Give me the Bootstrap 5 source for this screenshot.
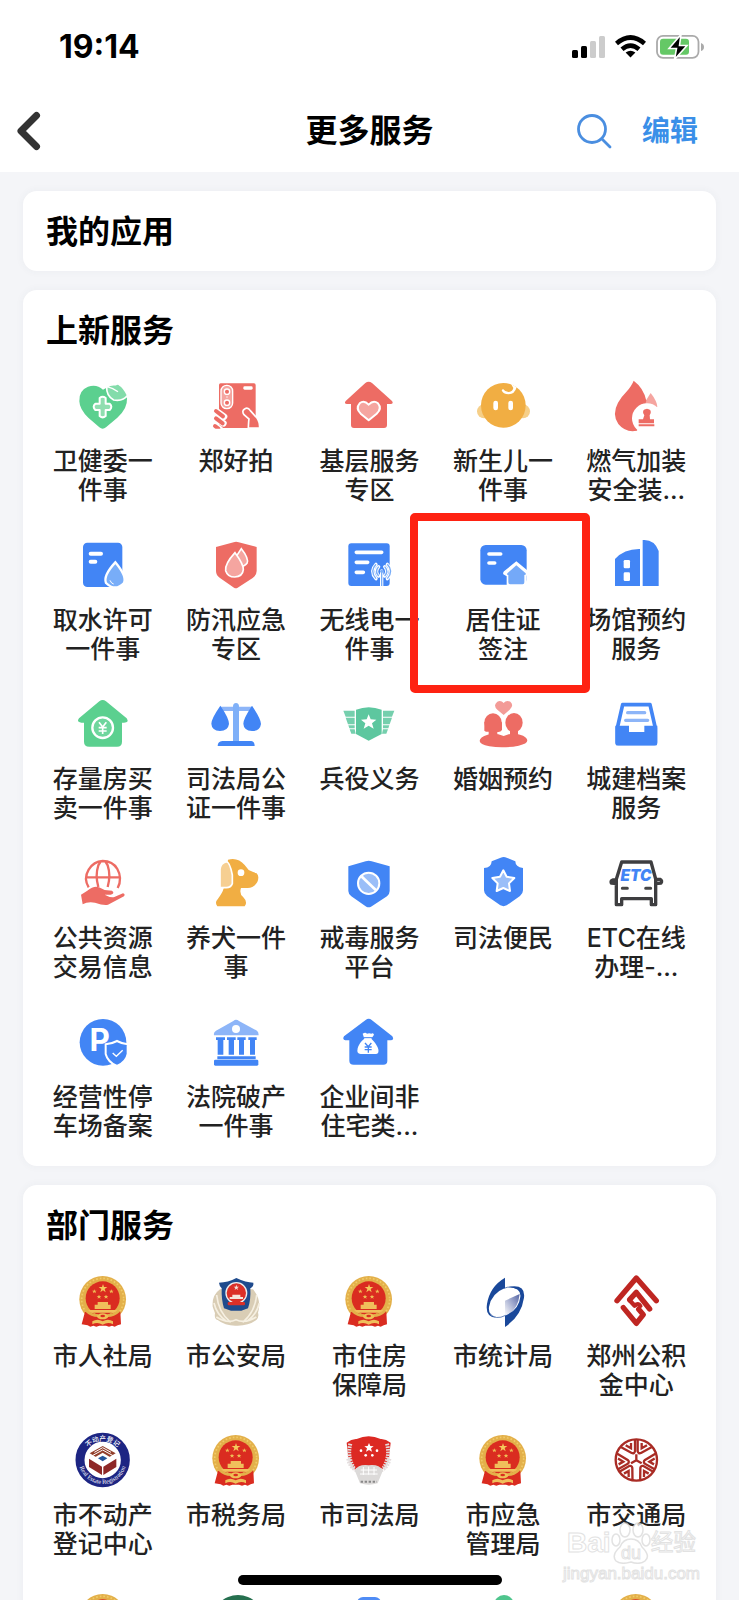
<!DOCTYPE html>
<html lang="zh-CN">
<head>
<meta charset="utf-8">
<meta name="viewport" content="width=device-width, initial-scale=1">
<title>更多服务</title>
<link href="https://cdn.jsdelivr.net/npm/bootstrap@5.3.0/dist/css/bootstrap.min.css" rel="stylesheet">
<style>
  :root { --blue:#4285f5; --sky:#8db5f8; --red:#ed6c64; --pink:#f5a5a0; --green:#5bd08f; --gold:#f1ae43; --ink:#222; }
  body { font-family: Inter, "Noto Sans CJK SC", sans-serif; color: var(--ink); background: #f4f5f8; }
  .status-bar { height: 90px; padding: 4px 35px 0 59px; }
  .clock { font-size: 32px; font-weight: 700; line-height: 36px; color: #000; }
  .title-bar { height: 82px; padding: 0 16px; }
  .page-title, .section-title { font-size: 32px; font-weight: 700; line-height: 44px; color: #000; }
  .edit-link { font-size: 28px; font-weight: 700; line-height: 40px; color: #3a8fe8; margin-right: 25px; }
  .side { flex: 1 1 0; }
  .actions { gap: 30px; }
  .sections { padding: 19px 23px 0; gap: 19px; }
  .panel { border: 0; border-radius: 14px; padding: 16px 13px; box-shadow: 0 0 8px rgba(60,70,100,.05); flex-shrink: 0; }
  .panel-services { padding-bottom: 25px; }
  .section-title { padding: 3px 0 1px 10px; }
  .services { display: grid; grid-template-columns: repeat(5, 1fr); row-gap: 32px; padding-top: 24px; }
  .service { display: flex; flex-direction: column; align-items: center; position: relative; color: var(--ink); text-decoration: none; text-align: center; font-size: 25px; font-weight: 500; line-height: 29px; white-space: nowrap; }
  .service > svg { width: 56px; height: 56px; margin-bottom: 13px; }
  .highlight { position: absolute; inset: -24px -20px -29px -26px; border: 8px solid #fe2212; border-radius: 5px; z-index: 2; }
  .home-bar { width: 264px; height: 10px; border-radius: 5px; background: #000; bottom: 15px; z-index: 4; }
  .watermark { right: 39px; bottom: 16px; z-index: 3; color: #fff; -webkit-text-stroke: 1px #d9d9d9; pointer-events: none; }
  .watermark-name { font-size: 28px; line-height: 40px; font-family: "Liberation Sans", "Noto Sans CJK SC", sans-serif; font-weight: 700; }
  .watermark-site { font-size: 17px; line-height: 20px; font-family: "Liberation Sans", sans-serif; }
</style>
<script src="https://cdn.jsdelivr.net/npm/bootstrap@5.3.0/dist/js/bootstrap.bundle.min.js"></script>
</head>
<body>
<svg width="0" height="0" class="position-absolute" aria-hidden="true">
  <symbol id="emblem" viewBox="135 276 168 168">
    <circle cx="218" cy="355" r="70" fill="#e3b04a"/>
    <circle cx="218" cy="355" r="63" fill="none" stroke="#f1cb68" stroke-width="5" stroke-dasharray="5 6"/>
    <circle cx="218" cy="352" r="51" fill="#da2c20"/>
    <path d="M165 392l16 2q18 10 37 10t37-10l16-2 2 38-10 3-9 4-8-3-9 3-9-3h-20l-9 3-9-3-9 3-8-4-18-3z" fill="#da2c20"/>
    <path d="M219 309l3 9h10l-8 6 3 10-8-6-8 6 3-10-8-6h10z" fill="#f5c95c"/>
    <g fill="#f0bd55"><path id="ministar" d="M193 325l2 4h5l-4 3 2 5-5-3-4 3 1-5-4-3h5z"/><use href="#ministar" x="51"/><use href="#ministar" x="14" y="16"/><use href="#ministar" x="35" y="16"/></g>
    <path d="M203 363h31v8h8v13h-48v-13h9zM174 387h88l-6 8h-76z" fill="#f0bf5b"/>
    <path d="M170 390q14 14 34 14M266 390q-14 14-34 14" fill="none" stroke="#e3b04a" stroke-width="8"/>
    <ellipse cx="218" cy="406" rx="17" ry="9" fill="#efc057"/><ellipse cx="218" cy="405" rx="7" ry="4" fill="#da2c20"/>
    <path d="M187 421q15-9 31 0 16-9 31 0v9q-15-8-31 1-16-9-31-1z" fill="#f0bf5b"/>
  </symbol>
</svg>
<div class="d-flex flex-column vh-100 overflow-hidden position-relative">
  <header class="bg-white flex-shrink-0">
    <div class="status-bar d-flex align-items-center justify-content-between">
      <span class="clock">19:14</span>
      <svg width="132" height="26" viewBox="573 34 132 26" role="img" aria-label="信号、无线网络、电池">
        <g fill="#000"><rect x="573" y="50" width="6" height="8" rx="1.5"/><rect x="582" y="46" width="6" height="12" rx="1.5"/></g>
        <g fill="#ccc"><rect x="591" y="41" width="6" height="17" rx="1.5"/><rect x="600" y="36" width="6" height="22" rx="1.5"/></g>
        <g fill="none" stroke="#000" stroke-width="4.6"><path d="M617.500 43.500Q631.500 31.500 645.500 43.500"/><path d="M623 49.200Q631.500 42 640 49.200"/></g>
        <path d="M626.600 52.500Q631.500 49 636.400 52.500L631.500 57.600Z"/>
        <rect x="658" y="35.800" width="41.500" height="22" rx="6" fill="#fff" stroke="#aaa" stroke-width="1.800"/>
        <rect x="661" y="38.800" width="29" height="16" rx="3" fill="#65c866"/>
        <path d="M702 43q3 1 3 4t-3 4z" fill="#aaa"/>
        <path d="M682 34.500L670 48.500h7.500L675.500 59.500 688 45.500h-7.500z" fill="#000" stroke="#fff" stroke-width="1.600"/>
      </svg>
    </div>
    <nav class="title-bar d-flex align-items-center" aria-label="标题栏">
      <div class="side"><button type="button" class="btn p-0 border-0 d-block" aria-label="返回"><svg class="d-block" width="26" height="40" viewBox="0 0 26 40"><path d="M20.500 4.500L5 20l15.500 15.500" fill="none" stroke="#333" stroke-width="7" stroke-linecap="round" stroke-linejoin="round"/></svg></button></div>
      <h1 class="page-title m-0">更多服务</h1>
      <div class="side actions d-flex justify-content-end align-items-center">
        <button type="button" class="btn p-0 border-0" aria-label="搜索"><svg class="d-block" width="36" height="36" viewBox="0 0 36 36" fill="none" stroke="#4a8ee0" stroke-width="2.800" stroke-linecap="round"><circle cx="16" cy="16" r="13.500"/><path d="M26 26l8 8"/></svg></button>
        <a class="edit-link text-decoration-none" href="#edit">编辑</a>
      </div>
    </nav>
  </header>

  <main class="sections d-flex flex-column flex-grow-1 overflow-hidden">
    <section class="card panel"><h2 class="section-title m-0">我的应用</h2></section>

    <section class="card panel panel-services">
      <h2 class="section-title m-0">上新服务</h2>
      <div class="services">
        <a class="service" href="#s1"><svg viewBox="135 264 168 168"><path d="M219 299Q200 281 174 290 146 301 148 334 149 359 175 383L208 412q10 8 20 0L262 383q31-27 29-58-3-22-22-31-29-11-50 5z" fill="var(--green)"/><path d="M230 291q12-9 26-7 9-5 12 0 14 8 25 32-14 19-42 14-22-12-21-39z" fill="#83dcaa" stroke="#fff" stroke-width="5"/><path d="M231 290q20 5 33 15" fill="none" stroke="#fff" stroke-width="4"/><path d="M209 324q9-7 18 0v17h12q10 9 0 19h-12v18q-9 8-18 0v-18h-13q-10-10 0-19h13z" fill="#90deb0" stroke="#fff" stroke-width="6" stroke-linejoin="round"/></svg>卫健委一<br>件事</a>
        <a class="service" href="#s2"><svg viewBox="534 264 168 168"><rect x="567" y="280" width="110" height="134" rx="5" fill="var(--red)"/><rect x="573" y="286" width="35" height="70" rx="17" fill="var(--pink)" stroke="#fff" stroke-width="4"/><g fill="var(--red)" stroke="#fff" stroke-width="4"><circle cx="591" cy="305" r="8"/><circle cx="591" cy="338" r="8"/></g><circle cx="591" cy="321" r="2" fill="#fff"/><rect x="640" y="289" width="28" height="10" rx="4" fill="#fff"/><g fill="none" stroke-linecap="round"><path d="M558 363l24 17M558 385l22 15M555 408l14 10" stroke="#fff" stroke-width="20"/><path d="M558 363l21 16M558 385l20 15M555 408l10 8" stroke="var(--red)" stroke-width="12"/></g><path d="M655 414q1-24 2-27l-15-13q-8-12 3-18 9-5 16 6l20 22q8 11 8 30z" fill="var(--red)" stroke="#fff" stroke-width="5"/><path d="M545 416h150v12H545z" fill="#fff"/></svg>郑好拍</a>
        <a class="service" href="#s3"><svg viewBox="935 264 168 168"><path d="M1008 279q10-8 20 0l60 54q6 8-4 9h-11v63q0 9-9 9h-90q-9 0-9-9v-63h-12q-10-1-4-9z" fill="var(--red)"/><path d="M1018 344q-14-15-27-4-13 15 3 31l24 20 24-20q17-16 4-31-14-11-28 4z" fill="var(--pink)" stroke="#fff" stroke-width="6" stroke-linejoin="round"/></svg>基层服务<br>专区</a>
        <a class="service" href="#s4"><svg viewBox="315 264 168 168"><circle cx="342" cy="364" r="21" fill="#f6cf88"/><circle cx="459" cy="364" r="21" fill="#f6cf88"/><circle cx="400" cy="346" r="67" fill="var(--gold)"/><path d="M399 297q8 10 18 9 11-2 13-12l-7-12 17 10q-6 21-24 21-17 0-21-12z" fill="#fff"/><g fill="#fff"><rect x="370" y="332" width="14" height="29" rx="7"/><rect x="415" y="332" width="14" height="29" rx="7"/></g></svg>新生儿一<br>件事</a>
        <a class="service" href="#s5"><svg viewBox="715 264 168 168"><path d="M843 309q19 24 20 42l-20 4-20-14q8-13 20-32z" fill="var(--pink)"/><path d="M792 272q30 22 38 60l-28 90q-34 7-56-20-20-29-1-64 9-16 24-31 17-19 23-35z" fill="var(--red)"/><circle cx="832" cy="385" r="45" fill="#fff"/><path d="M824 376q-11-18 8-20 18 2 8 20l1 12h12v12h-46v-12h13zM807 403h47v6h-47z" fill="var(--red)"/></svg>燃气加装<br>安全装...</a>

        <a class="service" href="#s6"><svg viewBox="135 81 168 168"><rect x="159" y="98" width="118" height="133" rx="13" fill="var(--blue)"/><path d="M182 131h31M182 155h14" stroke="#fff" stroke-width="12" stroke-linecap="round"/><path d="M256 157q35 42 26 62-26 27-54 0-9-22 28-62z" fill="#78adf8" stroke="#fff" stroke-width="7"/><path d="M240 211q4 10 11 11" stroke="#fff" stroke-width="3" fill="none"/></svg>取水许可<br>一件事</a>
        <a class="service" href="#s7"><svg viewBox="534 81 168 168"><path d="M611 97q7-3 15 0l54 14v72q0 13-12 21l-45 29q-5 3-11 0l-42-29q-12-8-12-21v-72z" fill="var(--red)"/><g fill="var(--pink)" stroke="#fff" stroke-width="5"><path d="M634 116l-23 35 15 19q17 1 25-10 7-14-17-44z"/><path d="M615 128q-31 34-28 54 6 19 27 19 24-1 26-22 1-16-25-51z"/></g></svg>防汛应急<br>专区</a>
        <a class="service" href="#s8"><svg viewBox="935 81 168 168"><rect x="957" y="100" width="124" height="128" rx="9" fill="var(--blue)"/><path d="M981 127h76M981 157h34M981 187h21" stroke="#fff" stroke-width="11" stroke-linecap="round"/><path d="M1040 163q-20 21 0 43M1048 170q-13 15 0 28M1074 163q20 21 0 43M1066 170q13 15 0 28M1057 183v50" fill="none" stroke="#fff" stroke-width="10" stroke-linecap="round"/><path d="M1040 163q-20 21 0 43M1048 170q-13 15 0 28M1074 163q20 21 0 43M1066 170q13 15 0 28M1057 183v45" fill="none" stroke="#78adf8" stroke-width="4"/><circle cx="1057" cy="184" r="5" fill="#78adf8"/></svg>无线电一<br>件事</a>
        <a class="service" href="#s9"><svg viewBox="315 81 168 168"><rect x="331" y="105" width="139" height="119" rx="16" fill="var(--blue)"/><path d="M357 132h35M357 159h17" stroke="#fff" stroke-width="11" stroke-linecap="round"/><path d="M439 154l40 33-9 10v27q-2 5-8 5h-44q-8 0-8-5v-25l-10-6q-2-5 2-9z" fill="#fff"/><path d="M439 166l28 24q2 5-4 5v22q0 6-5 6h-38q-5 0-5-6v-22q-5 0-3-5z" fill="#74a9f8"/></svg>居住证<br>签注<span class="highlight"></span></a>
        <a class="service" href="#s10"><svg viewBox="715 81 168 168"><path d="M736 147q28-31 75-30v111h-75zM819 90q35-3 48 33v105h-48z" fill="var(--blue)"/><rect x="762" y="150" width="19" height="25" rx="4" fill="#fff"/><rect x="762" y="187" width="19" height="26" rx="4" fill="#fff"/></svg>场馆预约<br>服务</a>

        <a class="service" href="#s11"><svg viewBox="135 18 168 168"><path d="M208 34q10-8 20 0l62 51q9 13-8 13h-6v57q0 15-15 15h-83q-16 0-16-15V98h-8q-16-2-7-13z" fill="var(--green)"/><circle cx="218" cy="113" r="31" fill="#6fd69d" stroke="#fff" stroke-width="7"/><path d="M207 97l11 14 11-14M218 111v21M206 113h24M206 123h24" fill="none" stroke="#fff" stroke-width="5"/></svg>存量房买<br>卖一件事</a>
        <a class="service" href="#s12"><svg viewBox="534 18 168 168"><path d="M570 50h97v13h-97z" fill="var(--sky)"/><path d="M609 158V50q0-11 9-11t9 11v108z" fill="#7fb0f8"/><path d="M571 47q26 37 26 55-3 21-27 21-25-2-26-22 0-15 27-54zM666 47q27 40 27 55-3 21-27 21-25-2-26-22 0-15 26-54zM577 153h87q10 2 10 15H563q0-13 14-15z" fill="var(--blue)"/></svg>司法局公<br>证一件事</a>
        <a class="service" href="#s13"><svg viewBox="935 18 168 168"><g fill="#5dc79f"><path d="M980 59q38-15 77 0v73l-39 20-38-20z"/><path id="wing" d="M942 62h34v18h-27zM949 83h27v20h-20zM957 106h19v9h-16zM961 118h15l3 13h-13z" opacity=".85"/><use href="#wing" transform="matrix(-1 0 0 1 2037 0)"/></g><path d="M1018 73l6 15 17 1-13 11 5 16-15-9-15 9 5-16-13-11 17-1z" fill="#fff"/></svg>兵役义务</a>
        <a class="service" href="#s14"><svg viewBox="315 18 168 168"><path d="M401 39q-8-9-19-4-14 11 0 24l19 16 18-16q14-13 2-24-13-5-20 4z" fill="#f39b97"/><g fill="var(--red)"><ellipse cx="369" cy="97" rx="26" ry="27"/><path d="M343 97v25q6 5 16 3h20q12 3 17-5V97z"/><path d="M356 118h26v18h-26zM420 118h24v18h-24z"/><ellipse cx="432" cy="98" rx="26" ry="29"/><path d="M329 153q0-12 24-19 16-5 32-1l16 5 15-5q19-4 34 1 21 6 22 17 0 11-26 16-46 9-88 2-29-6-29-16z"/></g></svg>婚姻预约</a>
        <a class="service" href="#s15"><svg viewBox="715 18 168 168"><path d="M759 44h82l16 70v47H743v-47z" fill="#fff" stroke="var(--blue)" stroke-width="11" stroke-linejoin="round"/><path d="M737 107h41v19h46v-19h39v50q0 9-9 9h-108q-9 0-9-9z" fill="var(--blue)"/><path d="M774 68h51M768 91h66" stroke="var(--sky)" stroke-width="10" stroke-linecap="round"/></svg>城建档案<br>服务</a>

        <a class="service" href="#s16"><svg viewBox="135 30 168 168"><g fill="none" stroke="var(--red)" stroke-width="7"><path d="M176 127q-16-26 0-53 15-25 42-26 30 0 44 24 16 28 1 57M205 126q-10-35 0-65l8-13M233 126q10-35 0-65l-8-13M168 97h102"/></g><path d="M153 149l19-12q20-16 35-10l17 8 22 2q10 8-4 12h-18q20 11 29 7l26-11q8 3 3 9l-48 25q-13 3-39-6-22-4-37 5z" fill="var(--red)"/></svg>公共资源<br>交易信息</a>
        <a class="service" href="#s17"><svg viewBox="534 30 168 168"><path d="M594 44q30-8 50 16l12 15q14 7 24 10 9 9 2 26-11 19-31 18h-18q-6 18 7 28 14 14 4 27h-82q-9-12 2-23 14-18 17-31z" fill="var(--gold)"/><path d="M570 128V73q2-19 19-23 10 0 18 40v26q-5 13-20 12z" fill="#f6cf92" stroke="#fff" stroke-width="5"/><circle cx="633" cy="83" r="10" fill="#fff"/></svg>养犬一件<br>事</a>
        <a class="service" href="#s18"><svg viewBox="935 30 168 168"><path d="M1009 49q9-3 18 0l54 15v74q0 9-8 16l-48 31q-7 3-14 0l-45-31q-9-7-9-16V64z" fill="var(--blue)"/><circle cx="1018" cy="115" r="32" fill="#9abef8" stroke="#fff" stroke-width="6"/><path d="M996 94l44 42" stroke="#fff" stroke-width="8"/></svg>戒毒服务<br>平台</a>
        <a class="service" href="#s19"><svg viewBox="315 30 168 168"><path d="M392 38q9-4 18 0l26 11q0 17 23 20v67q0 10-9 17l-40 28q-9 5-19 0l-40-28q-9-7-9-17V69q22 0 23-20z" fill="var(--blue)"/><path d="M400 76l10 19 23 4-16 16 3 23-20-9-20 9 3-23-16-16 23-4z" fill="#9abef8" stroke="#fff" stroke-width="6" stroke-linejoin="round"/></svg>司法便民</a>
        <a class="service" href="#s20"><svg viewBox="715 30 168 168"><path d="M756 51h88l14 51v77h-13v-18h-89v18h-16v-76zM742 116l-17-2q-3-7 4-9h12M857 103h14q8 4 3 11l-15 2" fill="#fff" stroke="#3e3e40" stroke-width="10" stroke-linejoin="round"/><text x="799" y="109" text-anchor="middle" font-family="Inter" font-size="46" font-weight="900" font-style="italic" fill="var(--blue)">ETC</text><path d="M758 130h15M828 130h15" stroke="#444" stroke-width="9" stroke-linecap="round"/></svg>ETC在线<br>办理-...</a>

        <a class="service" href="#s21"><svg viewBox="135 507 168 168"><circle cx="219" cy="592" r="70" fill="var(--blue)"/><text x="209" y="619" text-anchor="middle" font-family="Inter" font-size="94" font-weight="700" fill="#fff">P</text><path d="M261 588q17 9 32 10v29q-4 24-32 36-28-12-34-36v-29q17-1 34-10z" fill="var(--blue)" stroke="#fff" stroke-width="6"/><path d="M248 624l11 10 19-18" fill="none" stroke="#fff" stroke-width="4"/></svg>经营性停<br>车场备案</a>
        <a class="service" href="#s22"><svg viewBox="534 507 168 168"><path d="M618 524q5 0 9 4l54 29q5 3 5 14H552q-2-10 6-14l52-29q4-4 8-4z" fill="var(--sky)"/><circle cx="618" cy="552" r="12" fill="#fff"/><path d="M558 577h27v8h-5v44h-17v-44h-5zM591 577h26v8h-5v44h-16v-44h-5zM622 577h25v8h-5v44h-15v-44h-5zM655 577h25v8h-5v44h-15v-44h-5zM562 634h115v9H562z" fill="var(--blue)"/><rect x="552" y="644" width="133" height="18" rx="4" fill="var(--blue)"/></svg>法院破产<br>一件事</a>
        <a class="service" href="#s23"><svg viewBox="935 507 168 168"><path d="M1009 525q9-7 18 0l62 49q7 11-5 12h-10v62q0 11-12 11h-89q-13 0-13-12v-61h-12q-10-3-4-12z" fill="var(--blue)"/><path d="M1000 566q8-5 13 0 6-3 13 0 5-3 8 3l-8 12q18 18 21 32 3 14-8 14h-45q-13 0-9-17 5-18 20-29z" fill="#fff"/><path d="M1003 578h27" stroke="var(--blue)" stroke-width="3"/><path d="M1007 594l10 11 9-11M1017 605v18M1006 606h21M1006 614h21" fill="none" stroke="var(--blue)" stroke-width="4"/></svg>企业间非<br>住宅类...</a>
      </div>
    </section>

    <section class="card panel">
      <h2 class="section-title m-0">部门服务</h2>
      <div class="services">
        <a class="service" href="#d1"><svg><use href="#emblem"/></svg>市人社局</a>
        <a class="service" href="#d2"><svg viewBox="534 276 168 168"><path d="M570 325q-25 18-22 52l7 20q-3 17 8 20 23 18 56 17 36 1 60-17 9-9 5-22 12-37-15-70z" fill="#d9cdb5"/><path d="M560 342q5 52 42 82M680 342q-5 52-42 82M552 366q8 35 38 55M688 366q-8 35-38 55M559 408q33 21 59 8 26 13 61-8" fill="none" stroke="#f6f0e2" stroke-width="5"/><path d="M619 291q29 14 51 14 2 11-9 17 2 35-7 60l-20 7h-31l-21-7q-8-25-7-60-7-7-8-17 27 0 52-14z" fill="#1f4b8d"/><circle cx="619" cy="336" r="31" fill="#db3028" stroke="#eee" stroke-width="4"/><path d="M619 311l2 6h6l-5 4 2 6-5-4-5 4 2-6-5-4h6zM607 341h24v7h8v6h-40v-6h8z" fill="#f5e5dc"/><rect x="593" y="363" width="52" height="10" rx="4" fill="#db3028"/></svg>市公安局</a>
        <a class="service" href="#d3"><svg><use href="#emblem"/></svg>市住房<br>保障局</a>
        <a class="service" href="#d4"><svg viewBox="315 126 168 168"><defs><linearGradient id="fade" x1="1" x2="0" y1="0" y2="1"><stop stop-color="#5364a5"/><stop offset="1" stop-color="#fff"/></linearGradient></defs><path d="M405 209l44-20q-4 45-40 67l-4-3z" fill="url(#fade)"/><path d="M405 140v31q-41 16-48 57-3 27 22 32-34-1-28-41 8-52 54-79zM405 288v-34q42-17 46-57 3-26-36-29 52-10 47 32-8 55-57 88z" fill="#19489a"/><path d="M359 247q18 22 48 6M402 172q20-9 42 2" fill="none" stroke="#19489a" stroke-width="2"/></svg>市统计局</a>
        <a class="service" href="#d5"><svg viewBox="715 126 168 168"><g fill="none" stroke="#bf2622" stroke-width="16" stroke-linecap="round" stroke-linejoin="round"><path d="M742 209l58-68 60 68M780 206l20-22 40 50M761 230l39 47 21-26-14-16"/><path d="M779 207l16 17q11-9 17 1" stroke-width="13"/></g></svg>郑州公积<br>金中心</a>

        <a class="service" href="#d6"><svg viewBox="135 63 168 168"><circle cx="218" cy="147" r="68" fill="#fff" stroke="#1d2583" stroke-width="27"/><defs><path id="arc-top" d="M160 147a58 58 0 0 1 116 0"/><path id="arc-low" d="M146 147a72 72 0 0 0 144 0"/></defs><g fill="#fff" font-size="20" text-anchor="middle"><text><textPath href="#arc-top" startOffset="50%">不动产登记</textPath></text><text font-family="Liberation Serif" font-size="19"><textPath href="#arc-low" startOffset="50%">Real Estate Registration</textPath></text></g><path d="M218 105l39 22-39 23-39-23z" fill="#93402c"/><path d="M193 124l25-14 25 14M187 134l31-17 31 17" fill="none" stroke="#fff" stroke-width="3"/><path d="M218 125l28 17-28 17-28-17z" fill="#fff"/><path d="M218 134l14 8-14 9-14-9z" fill="#24559b"/><path d="M177 143l39 24v25l-39-24zM259 143l-39 24v25l39-24z" fill="#8e2827"/></svg>市不动产<br>登记中心</a>
        <a class="service" href="#d7"><svg><use href="#emblem"/></svg>市税务局</a>
        <a class="service" href="#d8"><svg viewBox="935 63 168 168"><path d="M952 95q15-12 30-11 36-17 72 0 15-1 30 11l-5 45q-10 34-34 42-27-12-56 0-23-5-32-41z" fill="#dc2923"/><path d="M963 98q-10 40 10 72M1073 98q10 40-10 72M957 143q4 31 38 40M1080 143q-4 31-38 40" fill="none" stroke="#e4dddd" stroke-width="12" stroke-dasharray="5 3"/><path d="M1019 96l4 9 10 1-8 6 3 10-9-5-9 5 3-10-8-6 10-1z" fill="#fff"/><g fill="#fff"><circle cx="995" cy="119" r="4"/><circle cx="1043" cy="119" r="4"/><circle cx="1009" cy="133" r="4"/><circle cx="1029" cy="133" r="4"/></g><path d="M976 178q12-19 42-15 30-4 43 15l-16 39q-27 8-53 0z" fill="#dcdad9"/><path d="M994 177h49M992 189h53M1002 168v24M1018 167v24M1034 168v24" stroke="#fff" stroke-width="3"/><path d="M994 212h49" stroke="#888" stroke-width="6" stroke-dasharray="7 5"/></svg>市司法局</a>
        <a class="service" href="#d9"><svg><use href="#emblem"/></svg>市应急<br>管理局</a>
        <a class="service" href="#d10"><svg viewBox="715 603 168 168"><g fill="none" stroke="#a92c25" stroke-width="7"><circle cx="800" cy="687" r="62"/><path d="M800 688v-18M800 688l-16 9M800 688l16 9"/><path id="knot" d="M796 627v34q-2 8-10 5l-34-19M784 636v16l-16-9M804 627v34q2 8 10 5l34-19M816 636v16l16-9"/><use href="#knot" transform="rotate(120 800 688)"/><use href="#knot" transform="rotate(240 800 688)"/></g></svg>市交通局</a>

        <a class="service" href="#d11" aria-label="更多部门"><svg><use href="#emblem"/></svg></a>
        <a class="service" href="#d12" aria-label="更多部门"><svg viewBox="0 0 56 56"><circle cx="30" cy="30" r="26" fill="#26704f"/></svg></a>
        <a class="service" href="#d13" aria-label="更多部门"><svg viewBox="0 0 56 56"><rect x="16" y="6" width="24" height="40" rx="6" fill="#4f8cf5"/></svg></a>
        <a class="service" href="#d14" aria-label="更多部门"><svg viewBox="0 0 56 56"><circle cx="29" cy="14" r="10" fill="#4fc58d"/></svg></a>
        <a class="service" href="#d15" aria-label="更多部门"><svg><use href="#emblem"/></svg></a>
      </div>
    </section>
  </main>

  <div class="watermark position-absolute text-center opacity-75">
    <div class="watermark-name d-flex align-items-center justify-content-center"><span>Bai</span><span class="position-relative"><svg class="d-block" width="40" height="42" viewBox="0 0 40 42" fill="#fff" stroke="#d9d9d9" stroke-width="1.500"><ellipse cx="14" cy="8" rx="5" ry="7"/><ellipse cx="27" cy="8" rx="5" ry="7"/><ellipse cx="5" cy="18" rx="4" ry="6"/><ellipse cx="35" cy="18" rx="4" ry="6"/><path d="M20 17q8 0 11 8 9 9 3 14-5 4-14 1-10 3-15-1-5-6 4-14 3-8 11-8z"/><text x="20" y="37" text-anchor="middle" font-size="18" font-weight="400" stroke-width="1">du</text></svg></span><span class="fw-normal fs-4">经验</span></div>
    <div class="watermark-site">jingyan.baidu.com</div>
  </div>
  <div class="home-bar position-absolute start-50 translate-middle-x"></div>
</div>
</body>
</html>
